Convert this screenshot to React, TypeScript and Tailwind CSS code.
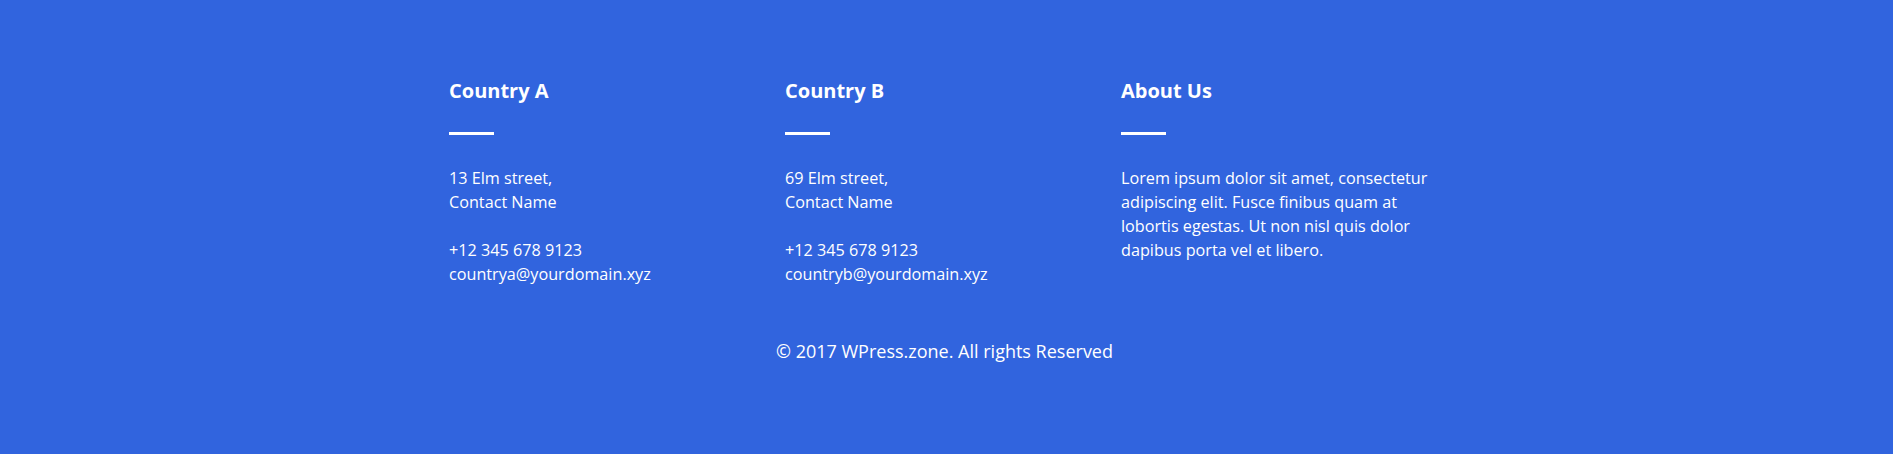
import React from "react";

const cols = [
  {
    title: "Country A",
    lines: ["13 Elm street,", "Contact Name", "", "+12 345 678 9123", "countrya@yourdomain.xyz"],
  },
  {
    title: "Country B",
    lines: ["69 Elm street,", "Contact Name", "", "+12 345 678 9123", "countryb@yourdomain.xyz"],
  },
];

export default function App() {
  return (
    <div className="h-[454px] w-full bg-[#3164de] text-white font-['Open_Sans',sans-serif]">
      <div className="flex pl-[449px] pt-[79px]">
        {cols.map((c) => (
          <div key={c.title} className="w-[336px]">
            <h3 className="text-[20px] leading-[24px] font-bold">{c.title}</h3>
            <div className="mt-[29px] h-[3px] w-[45px] bg-white" />
            <div className="mt-[31px] text-[16.2px] leading-[24px]">
              {c.lines.map((l, i) => (
                <div key={i} className="h-[24px]">{l}</div>
              ))}
            </div>
          </div>
        ))}
        <div className="w-[336px]">
          <h3 className="text-[20px] leading-[24px] font-bold">About Us</h3>
          <div className="mt-[29px] h-[3px] w-[45px] bg-white" />
          <p className="mt-[31px] w-[320px] text-[16.2px] leading-[24px]">
            Lorem ipsum dolor sit amet, consectetur adipiscing elit. Fusce finibus quam at lobortis egestas. Ut non nisl quis dolor dapibus porta vel et libero.
          </p>
        </div>
      </div>
      <p className="mt-[53px] pr-[4px] text-center text-[18px] leading-[24px]">
        © 2017 WPress.zone. All rights Reserved
      </p>
    </div>
  );
}
